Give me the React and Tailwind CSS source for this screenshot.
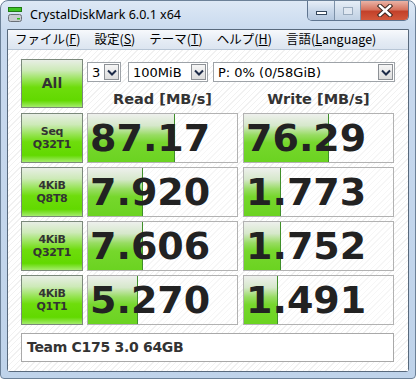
import React from 'react';

const rows = [
  { top: 'Seq', bottom: 'Q32T1', read: '87.17', readFill: 87, write: '76.29', writeFill: 85 },
  { top: '4KiB', bottom: 'Q8T8', read: '7.920', readFill: 55, write: '1.773', writeFill: 37 },
  { top: '4KiB', bottom: 'Q32T1', read: '7.606', readFill: 55, write: '1.752', writeFill: 37 },
  { top: '4KiB', bottom: 'Q1T1', read: '5.270', readFill: 50, write: '1.491', writeFill: 34 },
];

const greenBtn =
  'border border-[#7b897b] bg-[linear-gradient(180deg,#e8eee5_0%,#cdeab8_22%,#97e456_42%,#6edd0c_58%,#62d900_86%,#a4ec6c_100%)]';

const ArrowButton = () => (
  <div className="w-[15px] h-full border border-[#8d9196] bg-[linear-gradient(180deg,#f6f6f6,#dcdcdc)] flex items-center justify-center">
    <svg width="10" height="7" viewBox="0 0 10 7">
      <polyline points="1,1.5 5,5.5 9,1.5" fill="none" stroke="#1d2b48" strokeWidth="2" />
    </svg>
  </div>
);

const Select = ({ width, value }) => (
  <div className={`${width} h-[20px] border border-[#9ea3a8] bg-white flex items-stretch p-px`}>
    <div className="flex-1 pl-[3px] flex items-center text-[13px] leading-none text-black font-['DejaVu_Sans',sans-serif]">
      {value}
    </div>
    <ArrowButton />
  </div>
);

const ValueCell = ({ value, fill }) => (
  <div className="relative w-[151px] h-[50px] border border-[#b2b2b2] bg-white/40">
    <div
      className="absolute left-0 top-0 bottom-0 border-r border-[#3f8f2a] bg-[linear-gradient(180deg,#eef0ed_0%,#d6e8cb_24%,#97dc62_44%,#76d72c_60%,#6bd321_100%)]"
      style={{ width: fill }}
    />
    <div className="relative h-full flex items-center pl-[2px] text-[38px] leading-none font-bold text-[#222] font-['DejaVu_Sans',sans-serif]">
      {value}
    </div>
  </div>
);

const TitleButtons = () => (
  <div className="flex self-start h-[20px] border border-t-0 border-[#5f7590] rounded-b-[5px] overflow-hidden">
    <div className="w-[27px] h-full bg-[linear-gradient(180deg,#e6eef7,#c9d8ea_50%,#b4c7de)] flex items-end justify-center pb-[5px] border-r border-[#7d91a8]">
      <div className="w-[11px] h-[4px] bg-white border border-[#35475c]" />
    </div>
    <div className="w-[26px] h-full bg-[linear-gradient(180deg,#e6eef7,#d2deec_50%,#c0d0e3)] flex items-center justify-center border-r border-[#7d91a8]">
      <div className="w-[10px] h-[8px] border border-[#9aabbe] bg-[#dfe7f1]" />
    </div>
    <div className="w-[47px] h-full bg-[linear-gradient(180deg,#eab3a6,#d77560_45%,#c3412a_55%,#d2583c)] flex items-center justify-center">
      <svg width="16" height="13" viewBox="0 0 16 13">
        <path d="M3 2 L13 11 M13 2 L3 11" stroke="#3b2620" strokeWidth="4.5" strokeLinecap="square" />
        <path d="M3 2 L13 11 M13 2 L3 11" stroke="#ffffff" strokeWidth="2.5" strokeLinecap="square" />
      </svg>
    </div>
  </div>
);

const AppIcon = () => (
  <svg width="14" height="16" viewBox="0 0 14 16">
    <rect x="0.5" y="0.5" width="13" height="4" fill="#3ec224" stroke="#1f7a14" />
    <rect x="0.5" y="7.5" width="13" height="7" rx="2" fill="#c8ccd0" stroke="#6a7078" />
    <rect x="9" y="11" width="3" height="1.5" fill="#2fb81c" />
  </svg>
);

const MenuItem = ({ label, accel }) => (
  <span>
    {label}(<span className="underline">{accel}</span>)
  </span>
);

export default function App() {
  return (
    <div className="w-[416px] h-[379px] border border-[#6c8198] rounded-t-[8px] rounded-b-[4px] bg-[linear-gradient(180deg,#dde8f5,#c8d9ee_30px,#bfd3ea)] px-[6px] pb-[6px] flex flex-col overflow-hidden">
      <div className="h-[28px] flex justify-between">
        <div className="flex items-center pl-px gap-[8px]">
          <AppIcon />
          <span className="text-[12.5px] text-black font-['Noto_Sans',sans-serif] leading-none">
            CrystalDiskMark 6.0.1 x64
          </span>
        </div>
        <TitleButtons />
      </div>

      <div className="flex-1 border border-[#58697c] rounded-b-[3px] flex flex-col bg-white">
        <div className="h-[20px] border-b border-[#b7c5d5] bg-[linear-gradient(180deg,#f7f9fc,#e4ebf4_60%,#dce5f0)] flex items-center gap-[14px] pl-[7px] text-[12.5px] leading-none text-black font-['Noto_Sans_CJK_JP',sans-serif]">
          <MenuItem label="ファイル" accel="F" />
          <MenuItem label="設定" accel="S" />
          <MenuItem label="テーマ" accel="T" />
          <MenuItem label="ヘルプ" accel="H" />
          <span>
            言語(<span className="underline">L</span>anguage)
          </span>
        </div>

        <div className="flex-1 bg-[repeating-linear-gradient(135deg,#ffffff_0px,#ffffff_3px,#f1f1f1_3px,#f1f1f1_4px)] pl-[13px] pt-[9px] flex flex-col gap-[4px]">
          <div className="flex h-[50px]">
            <div className={`${greenBtn} w-[62px] h-[49px] flex items-center justify-center text-[14px] font-bold text-[#333] font-['DejaVu_Sans',sans-serif]`}>
              All
            </div>
            <div className="ml-[4px] flex flex-col">
              <div className="flex mt-[3px]">
                <Select width="w-[34px]" value="3" />
                <div className="ml-[7px]">
                  <Select width="w-[80px]" value="100MiB" />
                </div>
                <div className="ml-[5px]">
                  <Select width="w-[182px]" value="P: 0% (0/58GiB)" />
                </div>
              </div>
              <div className="flex mt-[7px] h-[20px] text-[14.5px] font-bold text-[#333] font-['DejaVu_Sans',sans-serif] leading-none">
                <div className="w-[151px] flex items-center justify-center">Read [MB/s]</div>
                <div className="w-[151px] ml-[5px] flex items-center justify-center">Write [MB/s]</div>
              </div>
            </div>
          </div>

          {rows.map((r, i) => (
            <div key={i} className="flex h-[50px]">
              <div className={`${greenBtn} w-[62px] h-[50px] flex flex-col items-center justify-center text-[11px] leading-[13px] font-bold tracking-[-0.3px] text-[#333] font-['DejaVu_Sans',sans-serif]`}>
                <span>{r.top}</span>
                <span>{r.bottom}</span>
              </div>
              <div className="ml-[4px]">
                <ValueCell value={r.read} fill={r.readFill} />
              </div>
              <div className="ml-[5px]">
                <ValueCell value={r.write} fill={r.writeFill} />
              </div>
            </div>
          ))}

          <div className="mt-[4px] w-[373px] h-[29px] border border-[#a9a9a9] bg-white flex items-center pl-[5px] text-[14px] tracking-[-0.3px] font-bold text-[#333] font-['DejaVu_Sans',sans-serif]">
            Team C175 3.0 64GB
          </div>
        </div>
      </div>
    </div>
  );
}
